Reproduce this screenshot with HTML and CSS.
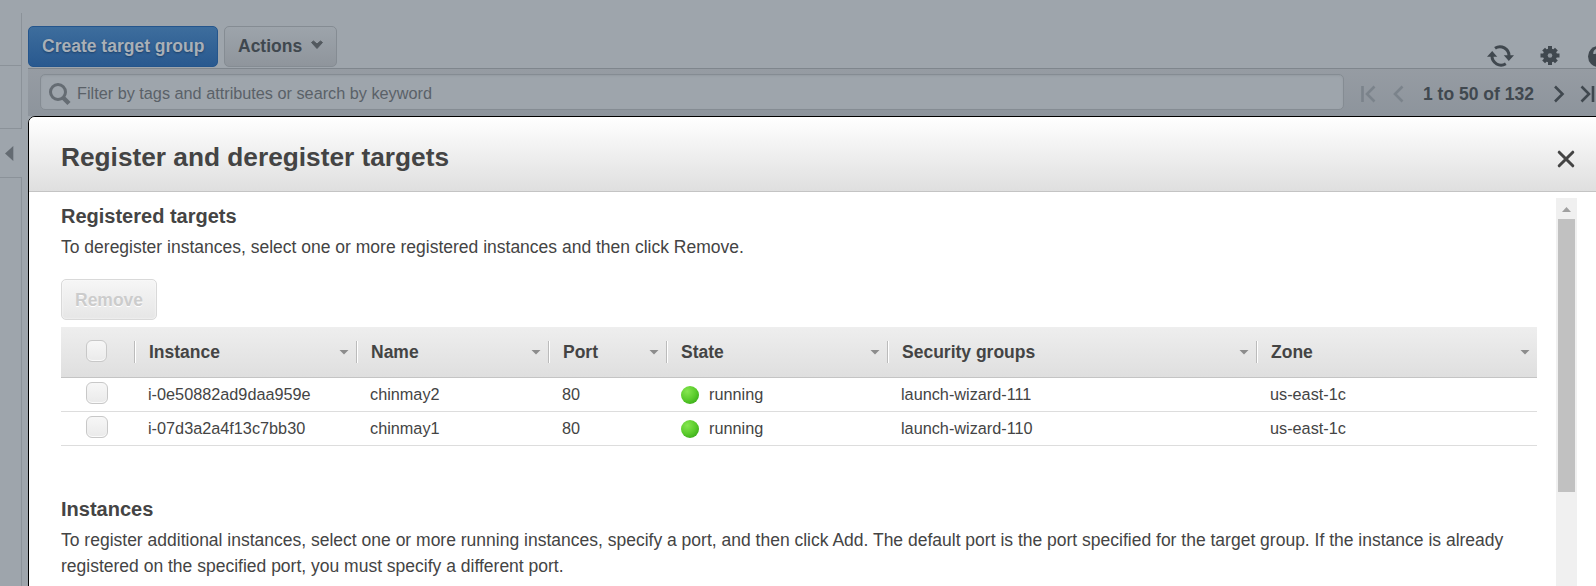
FILE: index.html
```html
<!DOCTYPE html>
<html lang="en">
<head>
<meta charset="utf-8">
<title>Register and deregister targets</title>
<link rel="stylesheet" href="styles.css">
</head>
<body>
<div class="console">
  <aside class="sidebar">
    <div class="side-top"></div>
    <div class="side-mid"></div>
    <div class="side-toggle"><svg width="9" height="15" viewBox="0 0 9 15"><path d="M8.3 0v15L0 7.500z" fill="#646b72"/></svg></div>
    <div class="side-rest"></div>
  </aside>
  <main class="main">
    <div class="toolbar">
      <button class="btn btn-primary">Create target group</button>
      <button class="btn btn-actions"><span>Actions</span><svg width="14" height="10" viewBox="0 0 14 10"><path d="M1.500 2.500l2-1.500L7 4l3.500-3L12.500 2.500 7 8.500z" fill="#53595f" stroke="#53595f"/></svg></button>
      <div class="tools">
        <svg width="27" height="24" viewBox="0 0 27 24"><g fill="none" stroke="#40484f" stroke-width="3"><path d="M8 4.300A9 9 0 0 1 22 12"/><path d="M18.800 19.700A9 9 0 0 1 5 12"/></g><path d="M16.800 11.300h10.200l-5.200 5.700zM0 12.700h10.200L5.200 7z" fill="#40484f"/></svg>
        <svg class="gear" width="20" height="21" viewBox="0 0 20 20"><path d="M10 .5v19M.5 10h19M3.600 3.600l12.800 12.800M3.600 16.400L16.400 3.600" stroke="#40484f" stroke-width="4"/><circle cx="10" cy="10" r="7" fill="#40484f"/><circle cx="10" cy="10" r="2.300" fill="#8f969d"/></svg>
        <svg class="help" width="21" height="21" viewBox="0 0 21 21"><circle cx="10.500" cy="10.500" r="10.500" fill="#40484f"/><path d="M6.500 8a4 4 0 1 1 5.500 3.500q-1.500.8-1.500 2.500M10.500 15.500v2.500" fill="none" stroke="#9ea5ac" stroke-width="2.500"/></svg>
      </div>
    </div>
    <div class="filterbar">
      <div class="search"><svg width="22" height="23" viewBox="0 0 22 23"><circle cx="9" cy="9" r="7.500" fill="none" stroke="#656c73" stroke-width="3"/><path d="M14 14.500l6 6" stroke="#656c73" stroke-width="4.500"/></svg><span class="placeholder">Filter by tags and attributes or search by keyword</span></div>
      <div class="pager">
        <svg width="240" height="18" viewBox="0 0 240 18"><g fill="none" stroke-width="2.600"><path d="M1.500 1v16M13.500 1.500L6 9l7.500 7.500M41.500 1.500L34 9l7.500 7.500" stroke="#7b838b"/><path d="M194 1.500L201.500 9l-7.500 7.500M220.500 1.500L228 9l-7.500 7.500M232 1v16" stroke="#40484f"/></g></svg>
        <span class="range">1 to 50 of 132</span>
      </div>
    </div>
  </main>
</div>

<section class="modal">
  <header class="modal-head">
    <h1>Register and deregister targets</h1>
    <svg class="close" width="18" height="18" viewBox="0 0 18 18"><path d="M2.200 2.200l13.600 13.600M15.800 2.200L2.200 15.800" stroke="#444" stroke-width="3" stroke-linecap="round"/></svg>
  </header>
  <div class="modal-body">
    <div class="content">
      <h2>Registered targets</h2>
      <p>To deregister instances, select one or more registered instances and then click Remove.</p>
      <button class="btn btn-remove">Remove</button>
      <div class="table">
        <div class="row head">
          <div class="check"><i class="box"></i></div>
          <div class="th">Instance<i class="sort"></i></div>
          <div class="th">Name<i class="sort"></i></div>
          <div class="th">Port<i class="sort"></i></div>
          <div class="th">State<i class="sort"></i></div>
          <div class="th">Security groups<i class="sort"></i></div>
          <div class="th">Zone<i class="sort"></i></div>
        </div>
        <div class="row">
          <div class="check"><i class="box"></i></div>
          <div class="td">i-0e50882ad9daa959e</div><div class="td">chinmay2</div><div class="td">80</div>
          <div class="td state"><i class="dot"></i><span>running</span></div>
          <div class="td">launch-wizard-111</div><div class="td">us-east-1c</div>
        </div>
        <div class="row">
          <div class="check"><i class="box"></i></div>
          <div class="td">i-07d3a2a4f13c7bb30</div><div class="td">chinmay1</div><div class="td">80</div>
          <div class="td state"><i class="dot"></i><span>running</span></div>
          <div class="td">launch-wizard-110</div><div class="td">us-east-1c</div>
        </div>
      </div>
      <h2 class="h-inst">Instances</h2>
      <p>To register additional instances, select one or more running instances, specify a port, and then click Add. The default port is the port specified for the target group. If the instance is already<br>registered on the specified port, you must specify a different port.</p>
    </div>
    <div class="scrollbar"><i class="up"></i><div class="thumb"></div></div>
  </div>
</section>
</body>
</html>
```
FILE: styles.css
```css
* { box-sizing: border-box; }
html, body { margin: 0; width: 1596px; height: 586px; overflow: hidden; }
body { position: relative; background: #9ea5ac; color: #444; font-family: "Liberation Sans", Arial, sans-serif; font-size: 17.5px; }
svg { display: block; flex: none; }
h1, h2, p { margin: 0; white-space: nowrap; }
i { display: block; flex: none; }

.console { display: flex; height: 586px; }
.sidebar { width: 22px; margin-right: 6px; padding-top: 13px; display: flex; flex-direction: column; }
.side-top { height: 53px; border-right: 1px solid #8b9299; border-bottom: 1px solid #8b9299; }
.side-mid { height: 63px; border-right: 1px solid #8b9299; border-bottom: 1px solid #8b9299; }
.side-toggle { height: 48px; padding: 17px 0 0 5px; }
.side-rest { flex: 1; border-top: 1px solid #8b9299; border-right: 1px solid #8b9299; }

.main { flex: 1; min-width: 0; }
.toolbar { height: 68px; padding-top: 26px; display: flex; gap: 6px; }
.btn { height: 41px; margin: 0; padding: 0; border-radius: 5px; display: flex; align-items: center; font: bold 17.5px "Liberation Sans", Arial, sans-serif; white-space: nowrap; }
.btn-primary { width: 190px; padding-left: 13px; border: 1px solid #24558c; background: linear-gradient(#3d6d9d, #29598f); color: #a9b0b7; text-shadow: 0 1px 2px #1c3f68; }
.btn-actions { width: 113px; padding-left: 13px; gap: 8px; border: 1px solid #858c93; background: linear-gradient(#9da4ab, #8f959c); color: #40484f; }
.btn-actions svg { margin-top: -4px; }
.tools { margin-left: auto; width: 109px; display: flex; padding-top: 18px; flex: none; }
.gear { margin: 1px 0 0 26px; }
.help { margin: 2px 0 0 28px; }

.filterbar { height: 48px; padding: 5px 0 0 12px; border-top: 1px solid #7f868d; background: linear-gradient(#969ca3, #8d949c); display: flex; }
.search { width: 1304px; height: 36px; flex: none; border: 1px solid #858c93; border-radius: 5px; background: #9ea5ac; box-shadow: inset 0 1px 2px #949ba2; display: flex; align-items: center; padding-left: 8px; gap: 6px; font-size: 16.25px; color: #5a6168; }
.search svg { margin-top: 5px; }
.placeholder { padding-top: 2px; }
.pager { display: grid; margin-left: 17px; padding-top: 11px; align-items: start; }
.pager > * { grid-area: 1 / 1; }
.range { margin-left: 62px; line-height: 18px; font-weight: bold; color: #40484f; }

.modal { position: absolute; left: 28px; top: 116px; width: 1580px; height: 480px; border: 1px solid #000; border-radius: 7px; background: #fff; overflow: hidden; }
.modal-head { height: 75px; border-bottom: 1px solid #c4c4c4; background: linear-gradient(#fff, #dfdfdf); display: flex; align-items: center; justify-content: space-between; padding: 6px 32px 0 32px; }
.modal-head h1 { font-size: 26.25px; }
.close { margin-top: 4px; }
.modal-body { display: flex; }
.content { width: 1476px; margin-left: 32px; flex: none; }
h2 { font-size: 20px; line-height: 24px; padding: 12px 0 0; }
p { line-height: 26px; padding-top: 6px; }
.btn-remove { width: 96px; margin-top: 19px; padding: 2px 0 0 13px; border: 1px solid #d9d9d9; background: linear-gradient(#f6f6f6, #e6e6e6); box-shadow: inset 0 0 2px #fff; color: #ccc; text-shadow: 0 1px 0 #fff; }

.table { margin-top: 7px; }
.row { display: grid; grid-template-columns: 73px 222px 192px 118px 221px 369px 281px; height: 34px; border-bottom: 1px solid #ddd; align-items: center; }
.head { height: 51px; border-bottom-color: #c4c4c4; background: linear-gradient(#eee, #dfdfdf); }
.check { padding-left: 25px; }
.box { width: 22px; height: 22px; border: 1px solid #c8c8c8; border-radius: 6px; background: linear-gradient(#f7f7f7, #eaeaea); box-shadow: inset 0 -1px #fafafa; }
.row:not(.head) .box { margin-top: -3px; }
.head .box { width: 21px; margin-top: -3px; }
.th { display: flex; align-items: center; justify-content: space-between; height: 22px; padding: 0 7px 0 14px; border-left: 1px solid #bbb; box-shadow: inset 1px 0 #fff; font-weight: bold; white-space: nowrap; }
.sort { width: 10px; height: 5px; background: #8c8c8c; clip-path: polygon(0 0, 100% 0, 50% 100%); }
.td { padding-left: 14px; font-size: 16.25px; white-space: nowrap; }
.state { display: flex; align-items: center; gap: 10px; padding-left: 15px; }
.dot { width: 18px; height: 18px; margin-top: 1px; border-radius: 50%; background: radial-gradient(circle at 35% 30%, #86e650 0, #5acb2b 50%, #279a10 100%); }

.h-inst { padding-top: 51px; }

.scrollbar { width: 21px; height: 400px; margin: 6px 0 0 19px; background: #f0f0f0; padding: 9px 2px 0; }
.up { width: 9px; height: 5px; margin: 0 0 7px 4px; background: #a0a0a0; clip-path: polygon(50% 0, 100% 100%, 0 100%); }
.thumb { height: 273px; background: #c1c1c1; }
```
